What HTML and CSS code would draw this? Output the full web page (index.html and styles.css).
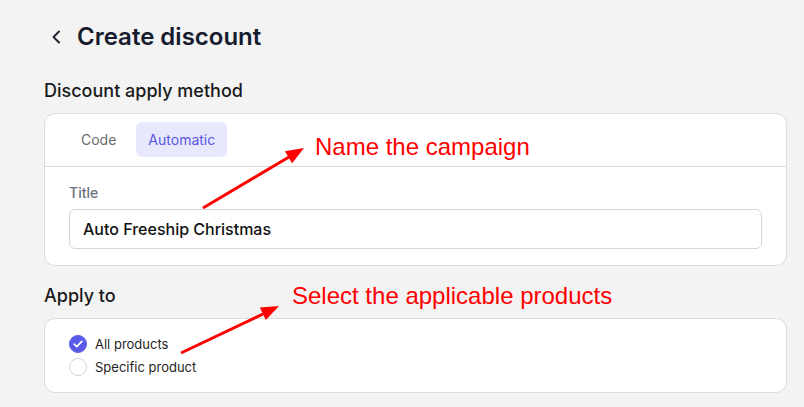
FILE: index.html
```html
<!DOCTYPE html>
<html>
<head>
<meta charset="utf-8">
<link rel="stylesheet" href="styles.css">
</head>
<body>
<div class="page">
  <div class="header">
    <svg class="back" width="10" height="14" viewBox="0 0 10 14"><path d="M8 1.5 L2.5 7 L8 12.5" fill="none" stroke="#1f2433" stroke-width="2" stroke-linecap="round" stroke-linejoin="round"/></svg>
    <h1 class="title">Create discount</h1>
  </div>

  <h2 class="section">Discount apply method</h2>
  <div class="card">
    <div class="tabs">
      <span class="tab">Code</span>
      <span class="tab active">Automatic</span>
    </div>
    <div class="card-body">
      <label class="label">Title</label>
      <div class="input">Auto Freeship Christmas</div>
    </div>
  </div>

  <h2 class="section">Apply to</h2>
  <div class="card options">
    <div class="option">
      <span class="radio checked"><svg width="10" height="8" viewBox="0 0 10 8"><path d="M1.2 4.2 L3.8 6.6 L8.8 1.4" fill="none" stroke="#fff" stroke-width="1.8" stroke-linecap="round" stroke-linejoin="round"/></svg></span>
      <span>All products</span>
    </div>
    <div class="option">
      <span class="radio"></span>
      <span>Specific product</span>
    </div>
  </div>
</div>

<div class="note note-1">Name the campaign</div>
<div class="note note-2">Select the applicable products</div>
<svg class="arrows" width="804" height="407" viewBox="0 0 804 407">
  <line x1="203" y1="208" x2="289" y2="157" stroke="#ff0000" stroke-width="3"/>
  <polygon points="304,148 292.1,163.2 284.9,151.2" fill="#ff0000"/>
  <line x1="181" y1="353" x2="263" y2="314" stroke="#ff0000" stroke-width="3"/>
  <polygon points="279,306 265.8,320.1 259.8,307.5" fill="#ff0000"/>
</svg>
</body>
</html>
```

FILE: styles.css
```css
* { box-sizing: border-box; }
html, body { margin: 0; padding: 0; }
body {
  background: #f3f3f3;
  font-family: Inter, "Noto Sans", sans-serif;
  color: #111827;
  width: 804px;
  height: 407px;
  overflow: hidden;
  position: relative;
}
.page {
  padding: 21px 17px 0 44px;
  display: flex;
  flex-direction: column;
}
.header {
  display: flex;
  align-items: center;
  height: 32px;
  margin-bottom: 24px;
}
.back { margin-left: 7px; margin-right: 16px; }
.title {
  margin: 0;
  font-size: 24px;
  line-height: 32px;
  font-weight: 600;
  color: #161b2e;
}
.section {
  margin: 0 0 8px;
  font-size: 18px;
  line-height: 28px;
  font-weight: 500;
  color: #1a1a1a;
}
.card {
  background: #fff;
  border: 1px solid #dcdcdc;
  border-radius: 11px;
  margin-bottom: 16px;
}
.tabs {
  display: flex;
  gap: 8px;
  padding: 8px 24px 9px;
  border-bottom: 1px solid #d9d9d9;
}
.tab {
  height: 35px;
  display: flex;
  align-items: center;
  padding: 0 12px;
  border-radius: 6px;
  font-size: 14px;
  color: #6b6b6b;
}
.tab.active {
  background: #e8e8fd;
  color: #5757e0;
}
.card-body {
  padding: 16px 24px 16px;
  display: flex;
  flex-direction: column;
}
.label {
  font-size: 14px;
  line-height: 20px;
  font-weight: 500;
  color: #6b7280;
  margin-bottom: 6px;
}
.input {
  height: 40px;
  border: 1px solid #d4d6dc;
  border-radius: 6px;
  padding: 0 13px;
  display: flex;
  align-items: center;
  font-size: 16px;
  font-weight: 500;
  color: #111;
}
.options {
  padding: 15px 24px;
  display: flex;
  flex-direction: column;
  gap: 3px;
}
.option {
  display: flex;
  align-items: center;
  gap: 8px;
  height: 20px;
  font-size: 13px;
  color: #1f1f1f;
}
.radio {
  width: 18px;
  height: 18px;
  border-radius: 50%;
  border: 1.5px solid #d1d5db;
  display: flex;
  align-items: center;
  justify-content: center;
  background: #fff;
}
.radio.checked {
  background: #5a5ae8;
  border-color: #5a5ae8;
}
.note {
  position: absolute;
  font-family: "Liberation Sans", Arial, sans-serif;
  font-size: 24px;
  line-height: 28px;
  color: #ff0000;
  white-space: nowrap;
}
.note-1 { left: 315px; top: 133px; }
.note-2 { left: 292px; top: 282px; }
.arrows {
  position: absolute;
  left: 0;
  top: 0;
  pointer-events: none;
}
```
